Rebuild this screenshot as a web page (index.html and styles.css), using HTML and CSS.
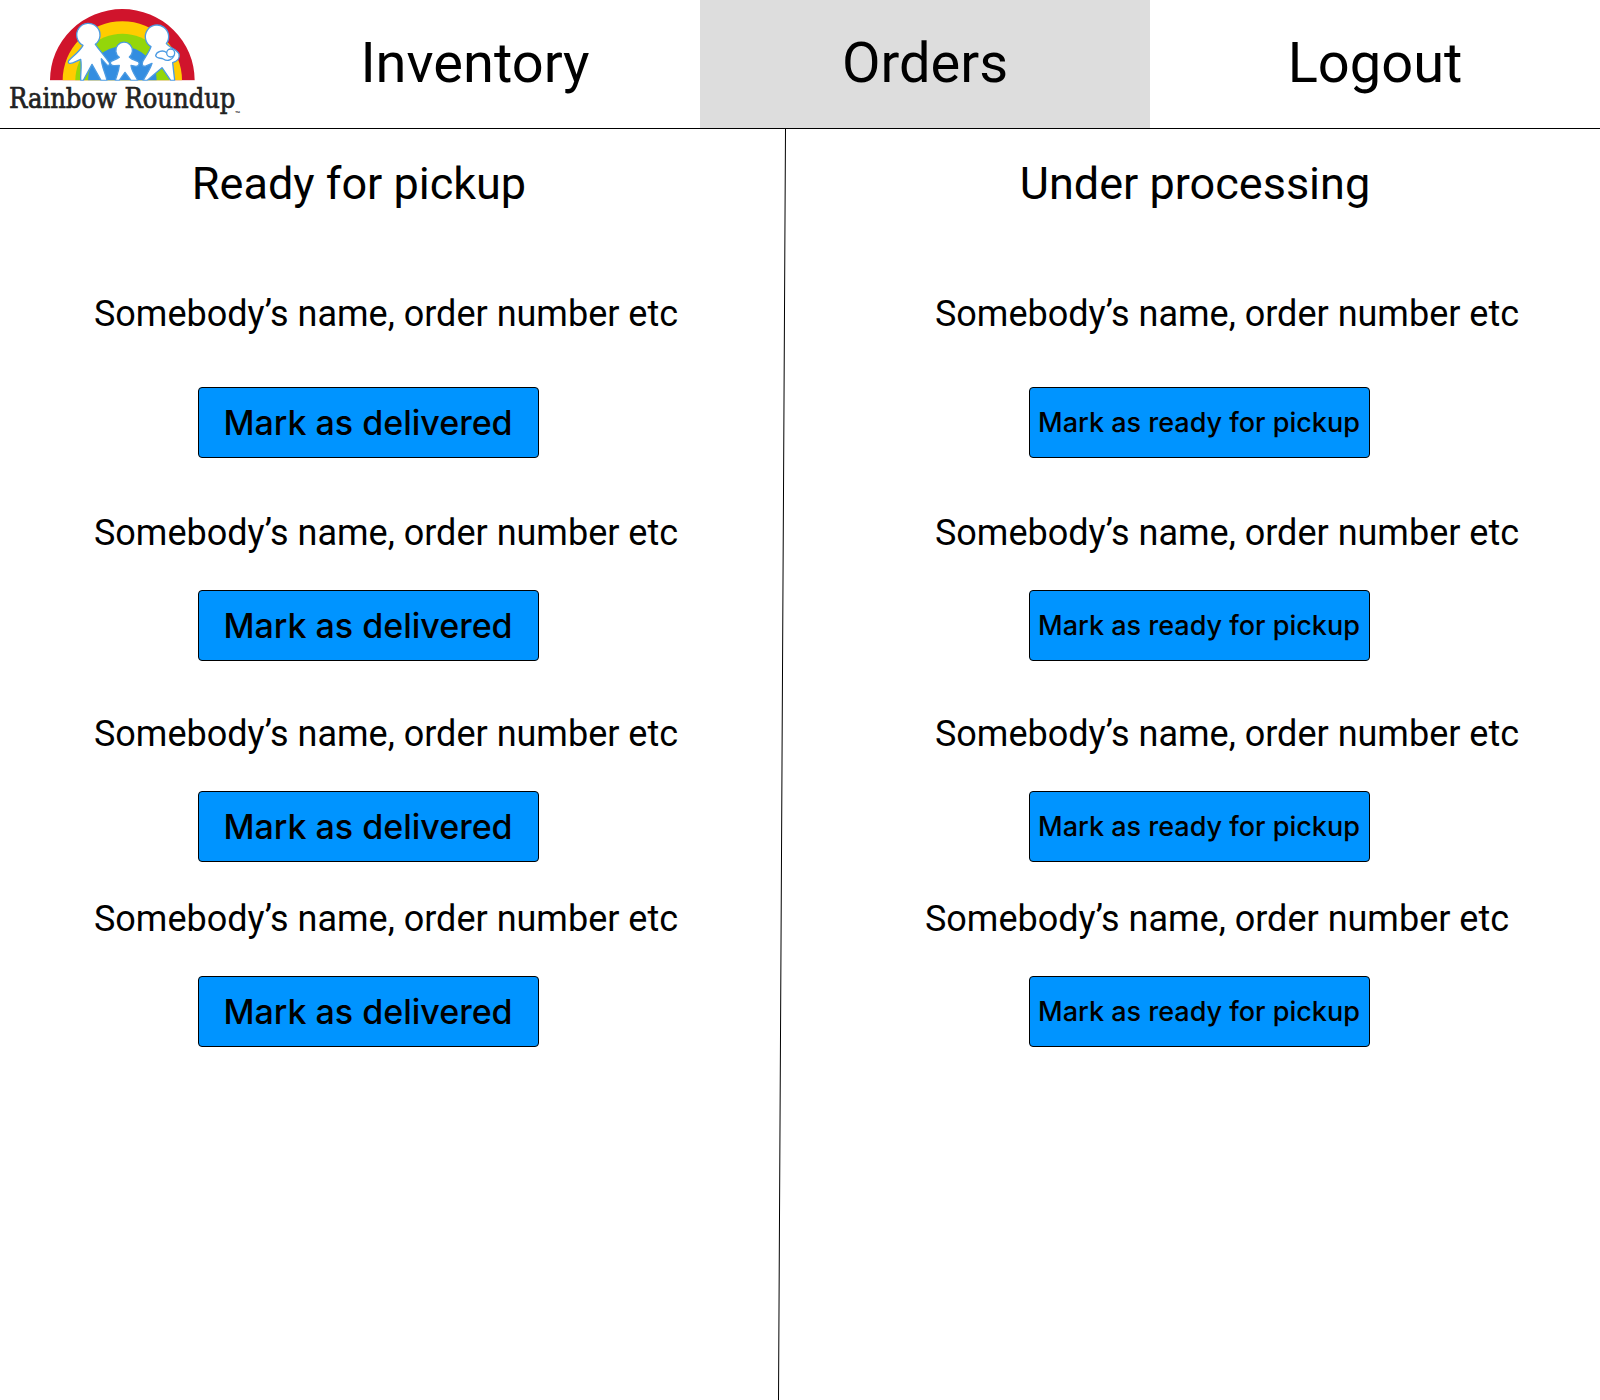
FILE: index.html
```html
<!DOCTYPE html>
<html lang="en">
<head>
  <meta charset="utf-8">
  <meta name="viewport" content="width=device-width, initial-scale=1">
  <title>Rainbow Roundup – Orders</title>
  <link rel="stylesheet" href="styles.css">
</head>
<body>
  <header class="site-header">
    <a class="logo" href="#" aria-label="Rainbow Roundup">
      <svg class="logo-art" viewBox="0 0 750 384">
        <path fill="#d0142c" d="M150 241a217 214 0 0 1 434 0z"/>
        <path fill="#fc0" d="M188 241a179 177 0 0 1 358 0z"/>
        <path fill="#94d60a" d="M226 241a141 140 0 0 1 282 0z"/>
        <path fill="#338de0" d="M264 241a103 102 0 0 1 206 0z"/>
        <g fill="#fff" stroke="#4b9be3" stroke-width="4" stroke-linejoin="round">
          <path d="M249 136C240 153 222 166 206 182C202 191 210 192 220 188L242 178C246 198 241 222 242 241H250L276 193L303 241H321C316 218 304 198 304 176L322 196C326 198 331 194 328 188C314 168 298 150 286 133A35 35 0 1 0 249 136Z"/>
          <path d="M358 172C350 179 340 180 333 184C328 191 334 198 344 197L358 196C357 213 350 226 346 241H358L375 217L393 241H413C406 226 394 213 393 196L408 199C417 198 420 190 415 185C406 180 396 180 388 171A25 25 0 1 0 358 172Z"/>
          <path d="M453 140C448 156 436 170 428 185C424 196 430 202 440 197L456 190C450 209 439 225 429 241H442L486 203L512 241H524L518 188C532 184 540 174 537 162C532 148 512 146 499 131A35 35 0 1 0 453 140Z"/>
          <path d="M500 158C488 148 469 155 467 167C470 177 482 173 490 177C503 186 518 180 523 164"/>
          <circle cx="512" cy="159" r="12"/>
        </g>
        <path fill="#fff" d="M150 242h434v6h-434z"/>
        <text class="logo-name" x="27" y="323">Rainbow Roundup</text>
        <text class="logo-mark" x="705" y="346">™</text>
      </svg>
    </a>
    <nav class="main-nav">
      <a class="nav-link" href="#">Inventory</a>
      <a class="nav-link nav-link-active" href="#" aria-current="page">Orders</a>
      <a class="nav-link" href="#">Logout</a>
    </nav>
  </header>

  <main class="board">
    <section class="column column-ready">
      <h1 class="column-title">Ready for pickup</h1>
      <ul class="orders">
        <li class="order order-first"><p class="order-name">Somebody’s name, order number etc</p><button class="action" type="button">Mark as delivered</button></li>
        <li class="order"><p class="order-name">Somebody’s name, order number etc</p><button class="action" type="button">Mark as delivered</button></li>
        <li class="order"><p class="order-name">Somebody’s name, order number etc</p><button class="action" type="button">Mark as delivered</button></li>
        <li class="order order-last"><p class="order-name">Somebody’s name, order number etc</p><button class="action" type="button">Mark as delivered</button></li>
      </ul>
    </section>
    <svg class="divider" viewBox="0 0 8 1271" preserveAspectRatio="none" aria-hidden="true">
      <path d="M7.500 0L.5 1271" stroke="#000" fill="none"/>
    </svg>
    <section class="column column-processing">
      <h1 class="column-title">Under processing</h1>
      <ul class="orders">
        <li class="order order-first"><p class="order-name">Somebody’s name, order number etc</p><button class="action" type="button">Mark as ready for pickup</button></li>
        <li class="order"><p class="order-name">Somebody’s name, order number etc</p><button class="action" type="button">Mark as ready for pickup</button></li>
        <li class="order"><p class="order-name">Somebody’s name, order number etc</p><button class="action" type="button">Mark as ready for pickup</button></li>
        <li class="order order-last"><p class="order-name">Somebody’s name, order number etc</p><button class="action" type="button">Mark as ready for pickup</button></li>
      </ul>
    </section>
  </main>
</body>
</html>
```
FILE: styles.css
```css
* {
  box-sizing: border-box;
}

body {
  display: flex;
  flex-direction: column;
  min-height: 100vh;
  margin: 0;
  background: #fff;
  color: #000;
  font-family: Roboto, "Liberation Sans", sans-serif;
}

.site-header {
  display: flex;
  border-bottom: 1px solid #000;
}

.logo {
  flex: none;
  width: 250px;
}

.logo-art {
  display: block;
  width: 250px;
  height: 128px;
}

.logo-name {
  fill: #222;
  stroke: #222;
  stroke-width: 2px;
  font-family: "DejaVu Serif Condensed", "DejaVu Serif", serif;
  font-size: 81px;
}

.logo-mark {
  fill: #222;
  font-family: "Liberation Sans", sans-serif;
  font-size: 16px;
  font-weight: 700;
}

.main-nav {
  display: flex;
  flex: 1;
}

.nav-link {
  display: flex;
  flex: 1;
  align-items: center;
  justify-content: center;
  padding-bottom: 2px;
  color: inherit;
  font-size: 56px;
  text-decoration: none;
}

.nav-link-active {
  background: #ddd;
}

.board {
  display: grid;
  flex: 1;
  grid-template-columns: minmax(0, 778fr) 8px minmax(0, 814fr);
}

.divider {
  width: 8px;
  height: 100%;
}

.column {
  padding-top: 28px;
}

.column-ready {
  padding-right: 42px;
}

.column-processing {
  padding-left: 12px;
}

.column-title {
  margin: 0;
  font-size: 45px;
  font-weight: 400;
  line-height: 54px;
  text-align: center;
}

.column-ready .column-title {
  padding-right: 18px;
}

.column-processing .column-title {
  padding-right: 8px;
}

.orders {
  margin: 0;
  padding: 81px 0 0;
  list-style: none;
}

.order {
  display: flex;
  flex-direction: column;
  align-items: center;
  gap: 35px;
  padding-bottom: 51px;
}

.order-first {
  gap: 51px;
  padding-bottom: 53px;
}

.order:nth-child(3) {
  padding-bottom: 35px;
}

.order-name {
  margin: 0;
  font-size: 36px;
  line-height: 44px;
}

.column-ready .order-name {
  padding-left: 36px;
}

.column-processing .order-name {
  padding-left: 56px;
}

.column-processing .order-last .order-name {
  padding-left: 36px;
}

.action {
  width: 341px;
  height: 71px;
  padding: 0;
  border: 1px solid #000;
  border-radius: 4px;
  background: #0094ff;
  color: #000;
  font-family: Inter, "Liberation Sans", sans-serif;
  font-size: 34px;
  font-weight: 500;
  white-space: nowrap;
}

.column-processing .action {
  font-size: 27px;
}
```
